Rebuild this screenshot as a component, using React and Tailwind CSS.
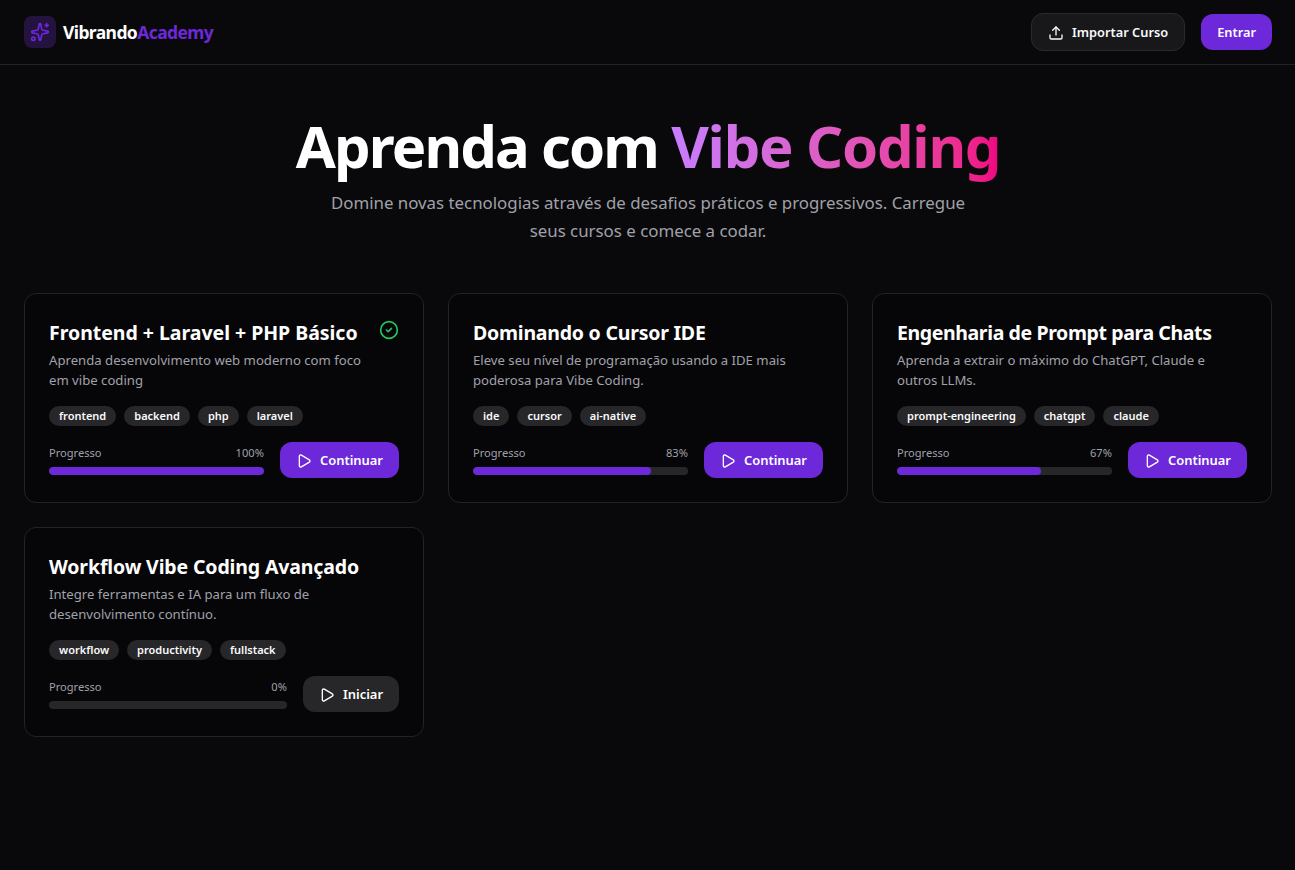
import React from "react";
import { Sparkles, Upload, Play, CircleCheck } from "lucide-react";

const courses = [
  { t: "Frontend + Laravel + PHP Básico", ls: "tracking-[-0.03px]", d: "Aprenda desenvolvimento web moderno com foco em vibe coding", tags: ["frontend", "backend", "php", "laravel"], p: 100, done: true },
  { t: "Dominando o Cursor IDE", ls: "tracking-[-0.23px]", d: "Eleve seu nível de programação usando a IDE mais poderosa para Vibe Coding.", tags: ["ide", "cursor", "ai-native"], p: 83 },
  { t: "Engenharia de Prompt para Chats", ls: "tracking-[-0.39px]", d: "Aprenda a extrair o máximo do ChatGPT, Claude e outros LLMs.", tags: ["prompt-engineering", "chatgpt", "claude"], p: 67 },
  { t: "Workflow Vibe Coding Avançado", ls: "tracking-[-0.14px]", d: "Integre ferramentas e IA para um fluxo de desenvolvimento contínuo.", tags: ["workflow", "productivity", "fullstack"], p: 0 },
];

function Card({ c }) {
  const started = c.p > 0;
  return (
    <div className="relative h-[210px] rounded-xl border border-[#232326] bg-[#060608] p-6">
      {c.done && <CircleCheck className="absolute right-6 top-[26px] h-5 w-5 text-[#22c55e]" strokeWidth={2} />}
      <h3 className={`mt-px text-[19.5px] font-bold leading-[28px] text-white whitespace-nowrap ${c.ls}`}>{c.t}</h3>
      <p className="mt-[3px] pr-[30px] text-[13.15px] leading-[20px] text-[#a1a1aa]">{c.d}</p>
      <div className="mt-[16px] flex gap-2">
        {c.tags.map((t) => (
          <span key={t} className="flex h-5 items-center rounded-full bg-[#27272a] px-[10px] pt-px text-[11px] font-semibold text-[#fafafa]">{t}</span>
        ))}
      </div>
      <div className="mt-[16px] flex items-center gap-4">
        <div className="min-w-0 flex-1">
          <div className="mb-[6px] flex justify-between text-[11.1px] leading-4 text-[#a1a1aa]">
            <span>Progresso</span>
            <span>{c.p}%</span>
          </div>
          <div className="h-2 overflow-hidden rounded-full bg-[#27272a]">
            <div className="h-full rounded-full bg-[#6d28d9]" style={{ width: `${c.p}%` }} />
          </div>
        </div>
        <button className={`flex h-9 items-center gap-2 rounded-xl px-4 pt-[2px] text-[12.95px] font-semibold text-white ${started ? "bg-[#6d28d9]" : "bg-[#27272a]"}`}>
          <Play className="h-4 w-4" strokeWidth={2} />
          {started ? "Continuar" : "Iniciar"}
        </button>
      </div>
    </div>
  );
}

export default function App() {
  return (
    <div className="min-h-[870px] overflow-hidden bg-[#09090b] font-['Noto_Sans','Open_Sans',sans-serif]">
      <div className="w-[1296px]">
        <header className="flex h-[65px] items-center justify-between border-b border-[#232326] px-6">
          <div className="flex items-center gap-[7px]">
            <div className="flex h-8 w-8 items-center justify-center rounded-lg bg-[#24123f]">
              <Sparkles className="h-5 w-5 text-[#6d28d9]" strokeWidth={2} />
            </div>
            <span className="text-[17.5px] font-bold tracking-[-0.6px] text-white">
              Vibrando<span className="text-[#6d28d9]">Academy</span>
            </span>
          </div>
          <div className="flex items-center gap-4">
            <button className="flex h-[38px] items-center gap-2 rounded-xl border border-[#2a2a2d] bg-[#18181b] px-4 pt-[2px] text-[12.8px] font-semibold text-[#fafafa]">
              <Upload className="h-4 w-4" strokeWidth={2} />
              Importar Curso
            </button>
            <button className="flex h-9 items-center rounded-xl bg-[#6d28d9] px-4 pt-[2px] text-[12.8px] font-semibold text-white">Entrar</button>
          </div>
        </header>
        <main className="px-6">
          <section className="pt-[46px] text-center">
            <h1 className="text-[58px] font-bold leading-[70px] tracking-[-1.9px] text-white">
              Aprenda com <span className="bg-gradient-to-r from-[#c77dff] to-[#f00080] bg-clip-text tracking-[-1.3px] text-transparent">Vibe Coding</span>
            </h1>
            <p className="mx-auto mt-[8px] max-w-[672px] text-[16.85px] leading-[28px] text-[#a1a1aa]">
              Domine novas tecnologias através de desafios práticos e progressivos. Carregue seus cursos e comece a codar.
            </p>
          </section>
          <section className="mt-[48px] grid grid-cols-3 gap-6">
            {courses.map((c) => <Card key={c.t} c={c} />)}
          </section>
        </main>
      </div>
    </div>
  );
}
